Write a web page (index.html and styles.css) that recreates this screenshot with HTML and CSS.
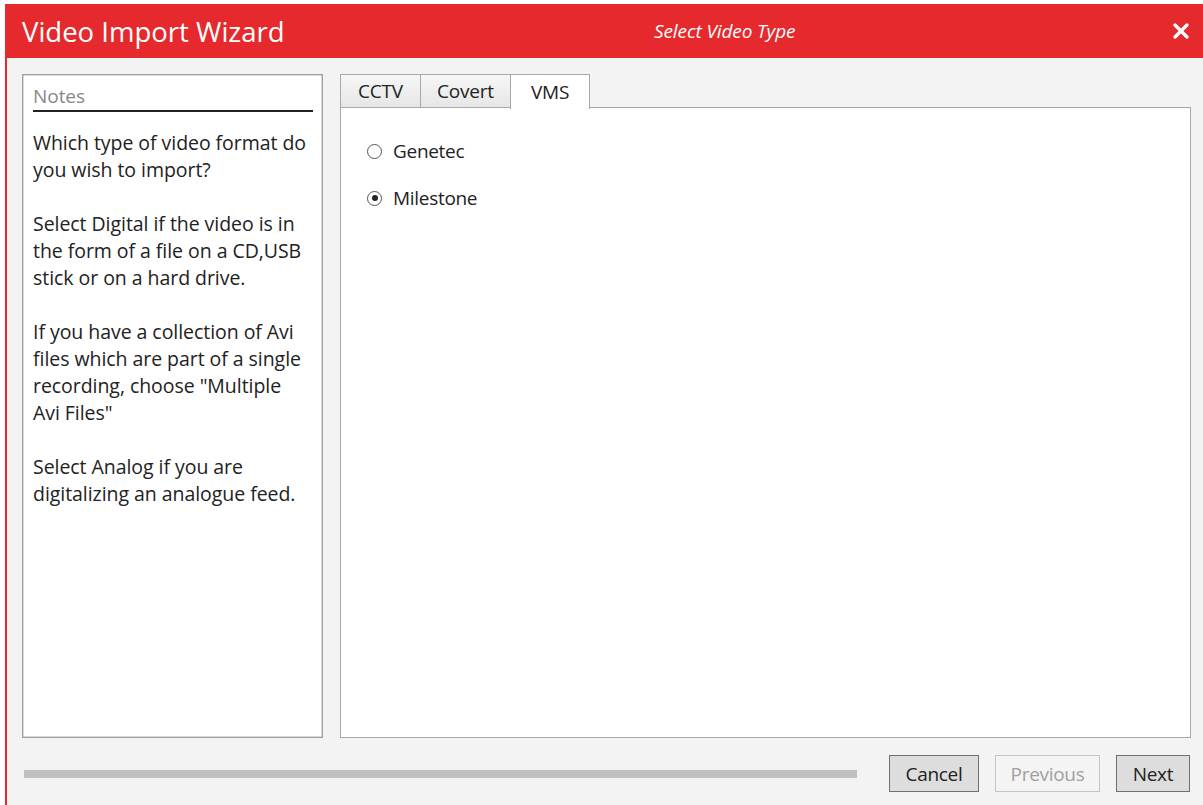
FILE: index.html
```html
<!DOCTYPE html>
<html lang="en">
<head>
<meta charset="utf-8">
<title>Video Import Wizard</title>
<link rel="stylesheet" href="styles.css">
</head>
<body>
<div class="window">
  <header class="titlebar">
    <h1 class="app-title">Video Import Wizard</h1>
    <div class="step-title">Select Video Type</div>
    <button class="close" aria-label="Close">
      <svg width="18" height="18" viewBox="0 0 18 18"><path d="M3 3 L15 15 M15 3 L3 15" stroke="#fff" stroke-width="3.4" stroke-linecap="round"/></svg>
    </button>
  </header>
  <main class="content">
    <aside class="notes">
      <div class="notes-head">Notes</div>
      <p>Which type of video format do<br>you wish to import?</p>
      <p>Select Digital if the video is in<br>the form of a file on a CD,USB<br>stick or on a hard drive.</p>
      <p>If you have a collection of Avi<br>files which are part of a single<br>recording, choose "Multiple<br>Avi Files"</p>
      <p>Select Analog if you are<br>digitalizing an analogue feed.</p>
    </aside>
    <section class="tabs">
      <div class="tab-strip">
        <div class="tab">CCTV</div>
        <div class="tab">Covert</div>
        <div class="tab active">VMS</div>
      </div>
      <div class="tab-body">
        <label class="radio"><span class="dot"></span>Genetec</label>
        <label class="radio checked"><span class="dot"></span>Milestone</label>
      </div>
    </section>
  </main>
  <footer class="footer">
    <div class="progress"></div>
    <button class="btn">Cancel</button>
    <button class="btn disabled">Previous</button>
    <button class="btn">Next</button>
  </footer>
</div>
</body>
</html>
```

FILE: styles.css
```css
html, body {
  margin: 0;
  padding: 0;
  background: #ffffff;
}

body {
  padding: 4px 0 0 5px;
  font-family: "Open Sans", "Noto Sans", sans-serif;
  color: #222;
}

.window {
  height: 801px;
  box-sizing: border-box;
  border-left: 2px solid #e5292d;
  background: #f3f3f3;
  display: flex;
  flex-direction: column;
}

.titlebar {
  height: 54px;
  background: #e5292d;
  display: flex;
  align-items: center;
  padding: 0 10px 0 17px;
  margin-left: -2px;
  color: #fff;
}

.app-title {
  margin: 0;
  width: 600px;
  font-weight: normal;
  font-size: 27.5px;
  letter-spacing: 0;
}

.step-title {
  flex: 1;
  font-style: italic;
  font-size: 19px;
  letter-spacing: -0.1px;
  padding-left: 32px;
}

.close {
  border: 0;
  background: none;
  padding: 0;
  width: 24px;
  height: 24px;
  display: flex;
  align-items: center;
  justify-content: center;
}

.content {
  flex: 1;
  display: flex;
  gap: 17px;
  padding: 16px 12px 0 15px;
  min-height: 0;
}

.notes {
  width: 301px;
  height: 664px;
  box-sizing: border-box;
  border: 1px solid #a0a0a0;
  box-shadow: inset 0 0 0 0.5px #b8b8b8;
  background: #fff;
  padding: 8px 9px 0 10px;
  font-size: 19.5px;
  letter-spacing: -0.05px;
  line-height: 27px;
  color: #222;
}

.notes-head {
  color: #888;
  font-size: 19px;
  line-height: 26px;
  border-bottom: 2px solid #222;
  padding-bottom: 1px;
  margin-bottom: 17px;
}

.notes p {
  margin: 0 0 27px 0;
}

.tabs {
  flex: 1;
  height: 664px;
  display: flex;
  flex-direction: column;
}

.tab-strip {
  display: flex;
  height: 34px;
  position: relative;
  z-index: 1;
}

.tab {
  box-sizing: border-box;
  height: 34px;
  border: 1px solid #a8a8a8;
  border-right: 0;
  background: linear-gradient(#f6f6f6, #e6e6e6);
  font-size: 19px;
  letter-spacing: -0.2px;
  display: flex;
  align-items: center;
  justify-content: center;
  color: #222;
}

.tab:nth-child(1) { width: 80px; }
.tab:nth-child(2) { width: 90px; }

.tab.active {
  width: 80px;
  height: 35px;
  background: #fff;
  border-right: 1px solid #a8a8a8;
  border-bottom: 0;
}

.tab-body {
  flex: 1;
  margin-top: -1px;
  border: 1px solid #a8a8a8;
  background: #fff;
  padding: 30px 0 0 26px;
}

.radio {
  display: flex;
  align-items: center;
  font-size: 19px;
  letter-spacing: -0.3px;
  height: 26px;
  margin-bottom: 21px;
  color: #222;
}

.dot {
  width: 15px;
  height: 15px;
  box-sizing: border-box;
  border: 1px solid #555;
  border-radius: 50%;
  background: #fff;
  margin-right: 11px;
  position: relative;
}

.radio.checked .dot::after {
  content: "";
  position: absolute;
  left: 3.5px;
  top: 3.5px;
  width: 6px;
  height: 6px;
  border-radius: 50%;
  background: #222;
}

.footer {
  height: 67px;
  box-sizing: border-box;
  display: flex;
  align-items: center;
  padding: 4px 12px 0 17px;
  gap: 16px;
}

.progress {
  width: 833px;
  height: 8px;
  background: #c0c0c0;
  margin-right: 16px;
}

.btn {
  height: 37px;
  box-sizing: border-box;
  border: 1px solid #707070;
  background: #dddddd;
  font-family: inherit;
  font-size: 19px;
  letter-spacing: -0.3px;
  color: #222;
  padding: 0;
}

.btn:nth-of-type(1) { width: 90px; }
.btn.disabled {
  width: 105px;
  background: #f4f4f4;
  border-color: #c4c4c4;
  color: #a0a0a0;
}
.btn:nth-of-type(3) { width: 74px; }
```
